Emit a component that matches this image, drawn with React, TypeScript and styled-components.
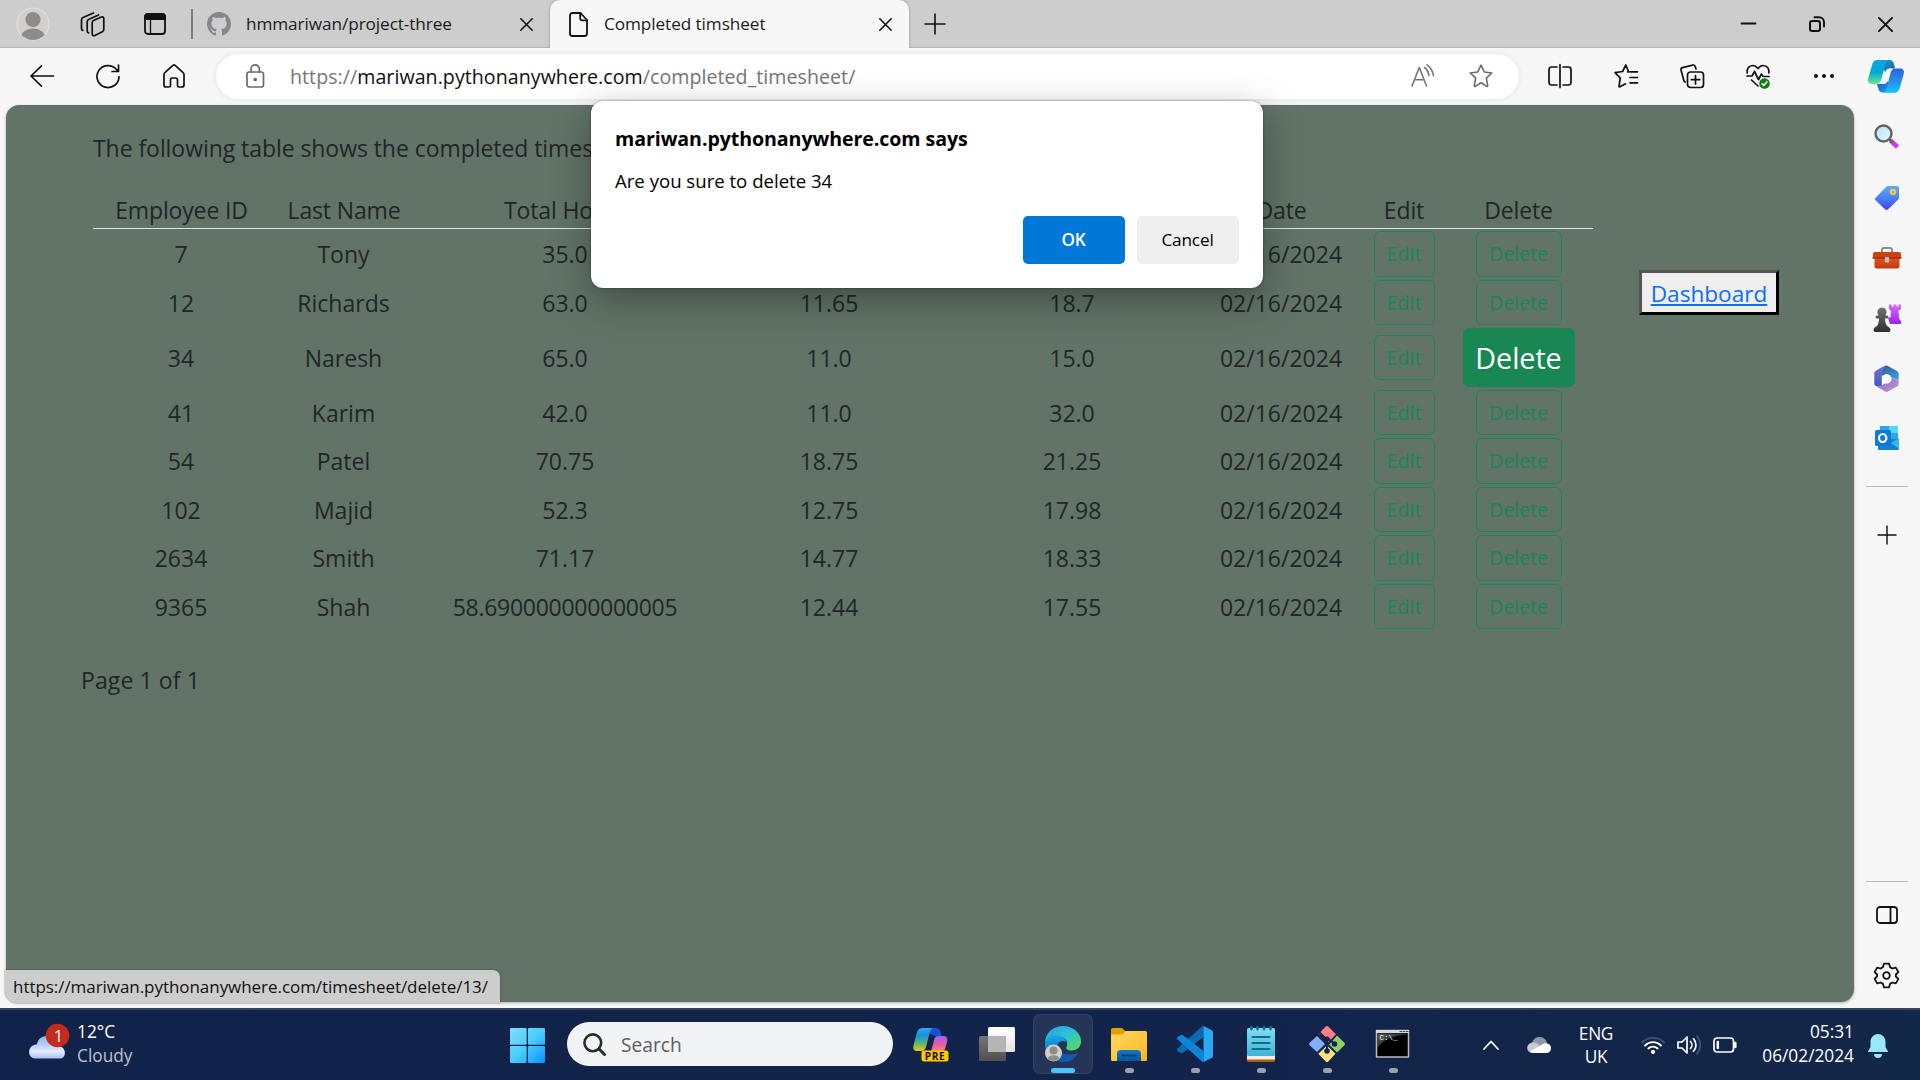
import React from 'react';
import styled, { createGlobalStyle } from 'styled-components';

const Global = createGlobalStyle`
  * { box-sizing: border-box; }
  body { margin: 0; overflow: hidden; }
  svg { display: block; flex: none; overflow: visible; }
`;

const Desktop = styled.div`
  width: 1920px;
  height: 1080px;
  display: flex;
  flex-direction: column;
  font-family: 'Open Sans', 'Noto Sans', sans-serif;
  font-size: 23px;
  color: #212529;
  overflow: hidden;
  background: #f7f7f7;
`;

/* ---------- tab strip ---------- */
const TabStrip = styled.header`
  height: 48px;
  flex: none;
  display: flex;
  align-items: center;
  background: #cdcdcd;
  box-shadow: inset 0 -2px 1px -1px #b4b4b4;
`;
const Slot = styled.div<{ $w: number }>`
  width: ${(p) => p.$w}px;
  flex: none;
  display: flex;
  align-items: center;
  justify-content: center;
`;
const TabDivider = styled.div`
  width: 2px;
  height: 30px;
  background: #7c7c7c;
`;
const Tab = styled.div<{ $active?: boolean; $w: number }>`
  width: ${(p) => p.$w}px;
  height: 48px;
  display: flex;
  align-items: center;
  padding: 0 17px 0 ${(p) => (p.$active ? 19 : 14)}px;
  border-radius: 10px 10px 0 0;
  background: ${(p) => (p.$active ? '#f7f7f7' : 'transparent')};
  box-shadow: ${(p) => (p.$active ? '0 0 3px rgba(0,0,0,.28)' : 'none')};
  clip-path: ${(p) => (p.$active ? 'inset(0 -4px 0 -4px)' : 'none')};
`;
const TabTitle = styled.span<{ $gap: number }>`
  flex: 1;
  margin-left: ${(p) => p.$gap}px;
  font-size: 17.2px;
  line-height: 24px;
  letter-spacing: -0.08px;
  color: #1b1b1b;
  white-space: nowrap;
`;
const Spacer = styled.div`
  flex: 1;
`;

/* ---------- toolbar ---------- */
const Toolbar = styled.div`
  height: 57px;
  flex: none;
  display: flex;
  align-items: center;
  background: #f7f7f7;
  padding: 0 0 1px 9px;
`;
const AddressBar = styled.div`
  width: 1303px;
  flex: none;
  height: 45px;
  margin-left: 9px;
  display: flex;
  align-items: center;
  padding: 0 26px 0 30px;
  border-radius: 23px;
  background: #fff;
  box-shadow: 0 0 6px rgba(0, 0, 0, 0.09);
`;
const Url = styled.span`
  flex: 1;
  margin-left: 26px;
  padding-top: 1px;
  font-size: 19.6px;
  line-height: 28px;
  letter-spacing: 0.05px;
  color: #767676;
  white-space: nowrap;
  b {
    font-weight: 400;
    color: #101010;
  }
`;

/* ---------- body ---------- */
const Body = styled.div`
  height: 903px;
  flex: none;
  display: flex;
  position: relative;
`;
const Page = styled.main`
  width: 1848px;
  height: 897px;
  margin-left: 6px;
  border-radius: 13px;
  background: #617467;
  box-shadow: 0 1px 3px rgba(0, 0, 0, 0.3);
  display: flex;
  padding: 27px 0 0 87px;
`;
const Content = styled.section`
  width: 1500px;
`;
const Intro = styled.p`
  margin: 0;
  line-height: 32px;
  letter-spacing: -0.06px;
  white-space: nowrap;
`;
const Table = styled.table`
  width: 1500px;
  margin-top: 30px;
  table-layout: fixed;
  border-collapse: separate;
  border-spacing: 0;
  text-align: center;
`;
const Th = styled.th<{ $w: number }>`
  width: ${(p) => p.$w}px;
  height: 35px;
  padding: 0 0 2px 1px;
  font-weight: 400;
  line-height: 32px;
  letter-spacing: -0.15px;
  border-bottom: 1px solid #dee2e6;
  white-space: nowrap;
`;
const Row = styled.tr<{ $tall?: boolean }>`
  height: ${(p) => (p.$tall ? 61.5 : 48.5)}px;
`;
const Td = styled.td`
  padding: 2px 0 0;
  line-height: 32px;
  letter-spacing: ${(p) => (String(p.children).length > 10 ? -0.28 : 0)}px;
`;
const ActionTd = styled.td`
  padding: 1px 0 0 1px;
`;
const Action = styled.button<{ $w: number; $hot?: boolean }>`
  display: block;
  margin: 0 auto;
  padding: 0;
  width: ${(p) => p.$w}px;
  height: ${(p) => (p.$hot ? 59 : 45.5)}px;
  border: 1px solid #198754;
  border-radius: 6px;
  background: ${(p) => (p.$hot ? '#198754' : 'transparent')};
  color: ${(p) => (p.$hot ? '#fff' : '#198754')};
  font: 400 ${(p) => (p.$hot ? 28.6 : 19.6)}px 'Open Sans', sans-serif;
`;
const Pager = styled.div`
  margin: 34px 0 0 -12px;
  line-height: 32px;
  letter-spacing: 0.1px;
`;
const DashButton = styled.button`
  width: 140px;
  height: 45px;
  margin: 138px 0 0 46px;
  padding: 2px 0 0;
  border: 3px solid;
  border-color: #555 #000 #000 #555;
  background: #efefef;
  font: 400 22.6px 'Open Sans', sans-serif;
  color: #0d6efd;
  text-decoration: underline;
`;
const StatusUrl = styled.div`
  position: absolute;
  left: 5px;
  bottom: 5px;
  width: 495px;
  height: 33px;
  padding-left: 8px;
  line-height: 33px;
  font-size: 17px;
  letter-spacing: -0.05px;
  border-radius: 0 7px 0 12px;
  background: #cdcdcd;
  color: #101010;
  white-space: nowrap;
  box-shadow: 0 0 2px rgba(0, 0, 0, 0.4);
`;
const Dialog = styled.div`
  position: absolute;
  left: 591px;
  top: -4px;
  width: 672px;
  height: 187px;
  padding: 24px;
  display: flex;
  flex-direction: column;
  border-radius: 12px;
  background: #fff;
  color: #000;
  box-shadow: 0 0 2px rgba(0, 0, 0, 0.5), 0 12px 38px rgba(0, 0, 0, 0.34);
`;
const DialogTitle = styled.h2`
  margin: 0;
  font-size: 19.6px;
  line-height: 28px;
  font-weight: 700;
  letter-spacing: -0.08px;
`;
const DialogText = styled.p`
  margin: 16px 0 0;
  font-size: 18.6px;
  line-height: 24px;
`;
const DialogActions = styled.div`
  display: flex;
  justify-content: flex-end;
  gap: 12px;
  margin-top: 23px;
`;
const DialogButton = styled.button<{ $primary?: boolean }>`
  width: 102px;
  height: 48px;
  border: 0;
  border-radius: 5px;
  padding: 0 1px 2px 0;
  background: ${(p) => (p.$primary ? '#0078d7' : '#efefef')};
  color: ${(p) => (p.$primary ? '#fff' : '#000')};
  font: ${(p) => (p.$primary ? 600 : 500)} 17.2px 'Open Sans', sans-serif;
  letter-spacing: -0.15px;
`;
const Sidebar = styled.aside`
  width: 66px;
  height: 903px;
  padding-right: 1px;
  display: flex;
  flex-direction: column;
  align-items: center;
`;
const SideItem = styled.div<{ $h: number }>`
  height: ${(p) => p.$h}px;
  display: flex;
  align-items: center;
  justify-content: center;
`;
const SideRule = styled.div`
  width: 42px;
  height: 1px;
  background: #b9b9b9;
`;

/* ---------- taskbar ---------- */
const Taskbar = styled.footer`
  height: 72px;
  flex: none;
  display: flex;
  align-items: center;
  border-top: 2px solid #34435f;
  background: linear-gradient(90deg, #12234a, #12244a 65%, #132748);
  color: #fff;
`;
const Weather = styled.div`
  width: 510px;
  height: 70px;
  padding: 0 0 2px 29px;
  display: flex;
  align-items: center;
  gap: 10px;
  font-size: 17.3px;
  line-height: 24px;
`;
const Muted = styled.div`
  color: #bcc2d0;
`;
const SearchBox = styled.div`
  width: 326px;
  height: 44px;
  margin: -2px 5px 0 22px;
  padding-left: 16px;
  display: flex;
  align-items: center;
  gap: 15px;
  border-radius: 22px;
  background: #f2f3f5;
  color: #5c5e62;
  font-size: 19.2px;
`;
const App66 = styled.div<{ $active?: boolean }>`
  width: 60px;
  height: 60px;
  margin: 0 3px 2px;
  padding-top: 12px;
  display: flex;
  flex-direction: column;
  align-items: center;
  justify-content: space-between;
  border-radius: 7px;
  background: ${(p) => (p.$active ? 'rgba(255,255,255,.08)' : 'transparent')};
  box-shadow: ${(p) => (p.$active ? 'inset 0 0 0 1px rgba(255,255,255,.07)' : 'none')};
`;
const Pill = styled.div<{ $kind: 'none' | 'open' | 'active' }>`
  width: ${(p) => (p.$kind === 'active' ? 24 : 9)}px;
  height: 5px;
  border-radius: 3px;
  margin-bottom: 1px;
  background: ${(p) => (p.$kind === 'active' ? '#4cc2ff' : p.$kind === 'open' ? '#9aa2b2' : 'transparent')};
`;
const Lang = styled.div`
  width: 60px;
  text-align: center;
  font-size: 17.3px;
  line-height: 23px;
  margin: 0 15px 1px 3px;
  letter-spacing: -0.3px;
`;
const Clock = styled.div`
  width: 111px;
  text-align: right;
  font-size: 17.3px;
  line-height: 24px;
  margin-bottom: 3px;
`;

/* ---------- icons ---------- */
type IconProps = {
  w?: number;
  h?: number;
  box?: string;
  color?: string;
  sw?: number;
  children: React.ReactNode;
};
const Icon = ({ w = 24, h = 24, box, color = '#111', sw = 1.6, children }: IconProps) => (
  <svg
    width={w}
    height={h}
    viewBox={box || `0 0 ${w} ${h}`}
    fill="none"
    stroke={color}
    strokeWidth={sw}
    strokeLinecap="round"
    strokeLinejoin="round"
  >
    {children}
  </svg>
);

const Avatar = () => (
  <Icon w={34} h={34} color="none">
    <defs>
      <clipPath id="avatarClip"><circle cx="17" cy="17" r="16" /></clipPath>
    </defs>
    <circle cx="17" cy="17" r="16" fill="#d2d0cd" stroke="#e2e0dd" strokeWidth="1.2" />
    <g clipPath="url(#avatarClip)" fill="#8f8b88">
      <circle cx="17" cy="12.5" r="7.6" />
      <ellipse cx="17" cy="32" rx="12.6" ry="10.5" />
    </g>
  </Icon>
);
const Workspaces = () => (
  <Icon w={25} h={25} sw={1.7}>
    <path d="M13.500 8.600 21.300 5a1.700 1.700 0 0 1 2.500 1.500V17.500a2.600 2.600 0 0 1-1.500 2.300l-7.400 3.700a1.800 1.800 0 0 1-2.700-1.600V10.800a2.400 2.400 0 0 1 1.300-2.200Z" />
    <path d="M18.500 3 9 7.200A2.800 2.800 0 0 0 7.200 9.800V19a2 2 0 0 0 1.300 1.900" />
    <path d="M13.500 1 3.500 5.200A3 3 0 0 0 1.500 8v8.500a2 2 0 0 0 1.300 1.900" />
  </Icon>
);
const TabActions = () => (
  <Icon w={22} h={22} sw={1.8}>
    <rect x="1" y="1" width="20" height="20" rx="3" />
    <path d="M1 6V4a3 3 0 0 1 3-3h14a3 3 0 0 1 3 3v2Z" fill="#111" />
    <path d="M6.500 6v15" strokeWidth="1.300" />
  </Icon>
);
const GitHub = () => (
  <svg width="24" height="24" viewBox="0 0 16 16" fill="#85878a">
    <path d="M8 0C3.580 0 0 3.580 0 8c0 3.540 2.290 6.530 5.470 7.590.4.070.55-.17.55-.38 0-.19-.01-.82-.01-1.490-2.010.37-2.530-.49-2.690-.94-.09-.23-.48-.94-.82-1.130-.28-.15-.68-.52-.01-.53.63-.01 1.080.58 1.230.82.72 1.210 1.870.87 2.330.66.070-.52.28-.87.51-1.070-1.780-.2-3.640-.89-3.640-3.950 0-.87.31-1.590.82-2.150-.08-.2-.36-1.020.08-2.120 0 0 .67-.21 2.200.82.64-.18 1.320-.27 2-.27s1.360.09 2 .27c1.530-1.040 2.200-.82 2.200-.82.44 1.100.16 1.920.08 2.120.51.56.82 1.270.82 2.150 0 3.070-1.870 3.750-3.650 3.950.29.25.54.73.54 1.480 0 1.070-.01 1.930-.01 2.200 0 .21.15.46.55.38A8.010 8.010 0 0 0 16 8c0-4.420-3.580-8-8-8Z" />
  </svg>
);
const Cross = ({ s = 13, sw = 1.6 }: { s?: number; sw?: number }) => (
  <Icon w={s} h={s} box="0 0 13 13" sw={sw}>
    <path d="m.8.8 11.400 11.400M12.200.8.8 12.200" />
  </Icon>
);
const Plus = ({ s = 20 }: { s?: number }) => (
  <Icon w={s} h={s} box="0 0 20 20" sw={1.6}><path d="M10 0v20M0 10h20" /></Icon>
);
const FileIcon = () => (
  <Icon w={19} h={25} sw={1.8}>
    <path d="M3.500 1h8L18 8v13.500a2.500 2.500 0 0 1-2.500 2.500h-12A2.500 2.500 0 0 1 1 21.500v-18A2.500 2.500 0 0 1 3.500 1Z" />
    <path d="M11.200 1.300v5.200a1.800 1.800 0 0 0 1.800 1.800h4.800" />
  </Icon>
);
const Lock = () => (
  <Icon w={18} h={24} color="#6b6b6b" sw={1.7}>
    <rect x="1" y="8" width="16.500" height="15" rx="2.200" />
    <path d="M5 8V5a4.200 4.200 0 0 1 8.400 0v3" />
    <circle cx="9.200" cy="15.500" r="1" fill="#6b6b6b" />
  </Icon>
);
const STAR = 'M12 1.200 15.300 8l7.500 1-5.500 5.200 1.400 7.500c.1.700-.4 1-1 .7L12 18.800l-5.700 3.600c-.6.300-1.100 0-1-.7l1.400-7.500L1.200 9l7.500-1Z';

const grad = (id: string, stops: string[], v = false) => (
  <linearGradient id={id} x1="0" y1="0" x2={v ? '0' : '1'} y2="1">
    {stops.map((c, i) => <stop key={c} offset={i / (stops.length - 1)} stopColor={c} />)}
  </linearGradient>
);

const Copilot = () => (
  <Icon w={36} h={33} color="none">
    <defs>
      {grad('cpA', ['#1ba0e2', '#00a9d8', '#6be58a'], true)}
      {grad('cpB', ['#2468d8', '#2a8af0', '#14c4f4'], true)}
      {grad('cpC', ['#12b5e0', '#12588c'])}
      {grad('cpD', ['#1848c8', '#22b8f0'])}
    </defs>
    <path d="M8 0h13.500c2.500 0 3.600 1.300 4.400 3.800L27 8.500h-4.500c-2.300 0-3 1.500-4 4.500Z" fill="url(#cpC)" />
    <path d="M28 32.500H14.500c-2.500 0-3.400-1.300-4.100-3.800L9 24h5c2.500 0 3.200-2 4-4.500Z" fill="url(#cpD)" />
    <path d="M9 0h12c-1.900.4-2.900 2.300-3.600 4.600L13.300 19.500c-.9 3-2.400 4.500-5.300 4.500H4c-3.600 0-4.700-2.400-3.600-6.300L4 5.200C5 1.600 6.300 0 9 0Z" fill="url(#cpA)" />
    <path d="M27.500 8.500H32c3.600 0 4.600 2.400 3.500 6.300L32 27.300c-1 3.600-2.300 5.200-5 5.200H15c1.900-.4 2.900-2.300 3.600-4.600L22.500 13c.8-3 2-4.500 5-4.500Z" fill="url(#cpB)" />
    <path d="M18 10.800c.6-1.600 1.700-2.300 3.200-2.300h3c-1.400.8-2 2.300-2.600 4.200L19.400 21c-.7 2-1.700 3-3.400 3h-4c1.400-.7 2.200-2 2.800-3.800Z" fill="#f4f9fb" />
  </Icon>
);

const CloudColor = () => (
  <Icon w={38} h={36} color="none">
    <defs>{grad('cl', ['#8fb4f5', '#dfe8fb'], true)}{grad('cl2', ['#b9cdf8', '#e3ebfb', '#a9c0f3'], true)}</defs>
    <path d="M8 22C7 14 12 10 18 10s11 4 12 10l-3 8H10Z" fill="url(#cl)" />
    <path d="M7 18.500c5-.5 8 1.500 9.500 4.500 3-4 13-4.500 17-1.500 4 3.500 3 11-2.500 11H6.500C-2 32.500-2 19.500 7 18.500Z" fill="url(#cl2)" />
    <circle cx="28.500" cy="9.500" r="11.800" fill="#c42b1c" />
    <text x="29.500" y="15.500" fill="#fff" fontSize="16.500" textAnchor="middle" fontFamily="Open Sans, sans-serif">1</text>
  </Icon>
);
const WindowsLogo = () => (
  <Icon w={35} h={35} color="none">
    <defs><linearGradient id="wn" gradientUnits="userSpaceOnUse" x1="0" y1="0" x2="35" y2="35"><stop stopColor="#85dcff" /><stop offset=".5" stopColor="#48cdfd" /><stop offset="1" stopColor="#0a94ff" /></linearGradient></defs>
    <g fill="url(#wn)">
      <rect width="16.700" height="16.700" rx="1" /><rect x="18" width="17" height="16.700" rx="1" />
      <rect y="18" width="16.700" height="17" rx="1" /><rect x="18" y="18" width="17" height="17" rx="1" />
    </g>
  </Icon>
);
const CopilotPre = () => (
  <Icon w={36} h={36} color="none">
    <defs>
      {grad('pa', ['#2aa8f0', '#1b8fe0', '#5bb86a', '#f5c518'], true)}
      {grad('pb', ['#9a62f0', '#e85aa8', '#ff8a5c'], true)}
    </defs>
    <path d="M9 2h14c3 0 5 3 5.500 8h-6L17 8Z" fill="#1c4fd0" />
    <path d="M9 2h11.500c-2.500.5-3.500 3-4.200 6L13.500 19c-1 4.500-2.500 6-6 6H4c-3.500 0-4.300-2.500-3.300-6.500L3.500 8C4.500 4 6 2 9 2Z" fill="url(#pa)" />
    <path d="M25 10h5c3.700 0 5 2 4 6l-2 7c-.6 2-1.500 3-3 3H18l3-12c.8-3 2-4 4-4Z" fill="url(#pb)" />
    <rect x="8.500" y="24.500" width="27" height="11" rx="2.500" fill="#ffc800" />
    <text x="22" y="33.600" fill="#14120a" fontSize="10" fontWeight="700" textAnchor="middle" letterSpacing=".6" fontFamily="Open Sans, sans-serif">PRE</text>
  </Icon>
);
const TaskView = () => (
  <Icon w={36} h={36} color="none">
    <defs>{grad('tv', ['#747474', '#505050'], true)}{grad('tw', ['#ffffff', '#e4e4e4'], true)}</defs>
    <rect x="0" y="10" width="27" height="25" rx="1.500" fill="url(#tv)" />
    <rect x="9" y="1" width="27" height="25" rx="1.500" fill="url(#tw)" />
    <path d="M9 10h18v16H10.500A1.500 1.500 0 0 1 9 24.500Z" fill="#b5b5b5" />
  </Icon>
);
const Edge = () => (
  <Icon w={36} h={36} color="none">
    <defs>
      {grad('eg', ['#2b9be8', '#2cc3d2', '#60e04a'])}
      {grad('eb', ['#1aa5e8', '#0b62bd'], true)}
      {grad('ed', ['#0d4f9e', '#1660b4'])}
    </defs>
    <path d="M0 17C0 7 8 0 18 0s18 7 18 15c0 6-4 9.500-9 9.500-4.500 0-6.500-1.500-5.500-3.500 1.500-2 1.500-9-5.500-10C9 10 2 12 0 17Z" fill="url(#eg)" />
    <path d="M0 17C2 11 7 9 12 9.500c6 .5 9 4 9.500 7-3-3-8.500-1.500-9.500 3.500-1 7 4 14 10 15.500C10 38-1 29 0 17Z" fill="url(#eb)" />
    <path d="M12.500 18c-1.500 7 6.500 13 20.500 9.200-3 5.300-8 8.800-14 8.800-7 0-10-12-6.500-18Z" fill="url(#ed)" />
    <circle cx="8.500" cy="27" r="8.500" fill="#d2d0cd" />
    <circle cx="8.500" cy="24.500" r="4" fill="#8f8b88" />
    <path d="M2.500 32.500c1.500-4.500 10.500-4.500 12 0a8.500 8.500 0 0 1-12 0Z" fill="#8f8b88" />
  </Icon>
);
const Folder = () => (
  <Icon w={36} h={36} color="none">
    <defs>{grad('fo', ['#ffd766', '#fbb91a'])}{grad('fb', ['#1277cf', '#0b559e'], true)}</defs>
    <path d="M0 4a2 2 0 0 1 2-2h9l4 3.500V9H0Z" fill="#e09f00" />
    <path d="M0 8.500h11L15 5h19.500A1.500 1.500 0 0 1 36 6.500v27a1.500 1.500 0 0 1-1.500 1.500h-33A1.500 1.500 0 0 1 0 33.500Z" fill="url(#fo)" />
    <path d="M6 35v-7a4 4 0 0 1 4-4h16a4 4 0 0 1 4 4v7Z" fill="url(#fb)" />
    <path d="M11 29.500h14" stroke="#0a3f78" strokeWidth="1.800" strokeLinecap="round" />
  </Icon>
);
const VSCode = () => (
  <Icon w={36} h={36} color="none">
    <path d="M26.500 0v11L5 27.500 .9 25.200C-.2 24.500-.3 23.300.6 22.400L25 .5Z" fill="#0a6cb4" />
    <path d="M26.500 36V25L5 8.500.9 10.800c-1.100.7-1.200 1.900-.3 2.800L25 35.500Z" fill="#0c86d8" />
    <path d="M26.500 0l8 3.900c1 .5 1.500 1.300 1.500 2.400v23.400c0 1.100-.5 1.900-1.500 2.400l-8 3.900Z" fill="#28a8f0" />
  </Icon>
);
const Notepad = () => (
  <Icon w={28} h={36} color="none">
    <defs>{grad('np', ['#83dcf2', '#43b2d4'], true)}</defs>
    <rect y="31" width="28" height="5" rx="1.500" fill="#b35a12" />
    <rect y="28" width="28" height="5.500" fill="#f1eeee" />
    <rect y="2" width="28" height="28" rx="1.500" fill="url(#np)" />
    <path d="M5.500 11h17M5.500 17h17M5.500 23h17" stroke="#0a6d8e" strokeWidth="2" strokeLinecap="round" />
    <g fill="#0f7391">
      {[4.5, 10.5, 17, 23.5].map((x) => <rect key={x} x={x - 1.4} y="0" width="2.800" height="4.500" rx="1.400" />)}
    </g>
  </Icon>
);
const Git = () => (
  <Icon w={36} h={36} color="none">
    <path d="M16.500.8a2 2 0 0 1 3 0l7.500 7.500-8 8.200-2.500-2.500v-3L9.500 8Z" fill="#ff7f86" />
    <path d="M28 9.500l7.200 7a2 2 0 0 1 0 3L28 26.500l-8-8 2-2Z" fill="#8dd06a" />
    <path d="M8 10l8 8-8 8-7.200-6.600a2 2 0 0 1 0-3Z" fill="#82aefc" />
    <path d="M18 19.500l8.500 8.300-7 7.400a2 2 0 0 1-3 0l-7.200-7.400Z" fill="#ffe180" />
    <path d="M10.500 6.500 18 14v12M18 12l8 6" stroke="#12244a" strokeWidth="2" />
    <circle cx="18" cy="13" r="2.600" fill="#12244a" /><circle cx="18" cy="25" r="2.800" fill="#12244a" /><circle cx="25.500" cy="18" r="2.800" fill="#12244a" />
  </Icon>
);
const Cmd = () => (
  <Icon w={34} h={36} color="none">
    <defs>{grad('cm', ['#777', '#111'])}</defs>
    <rect x=".5" y="4.500" width="32" height="26.500" fill="#000" stroke="#b9bcc0" strokeWidth="1.500" />
    <rect x="0" y="4" width="33" height="3" fill="#d5d8de" />
    <path d="M24 5.500h2M27.500 5.500h1.500M30.500 5.500H32" stroke="#444c5c" strokeWidth="1.200" />
    <path d="M1.500 7.500h30v1C17 9.500 6 14 1.500 22Z" fill="url(#cm)" opacity=".75" />
    <text x="3.500" y="14" fill="#fff" fontSize="7.500" fontFamily="Liberation Mono, monospace">C:\_</text>
  </Icon>
);

const columns: [string, number][] = [
  ['Employee ID', 176], ['Last Name', 149], ['Total Hours', 294], ['', 234],
  ['', 252], ['Date', 166], ['Edit', 79], ['Delete', 150],
];
const rows = [
  ['7', 'Tony', '35.0', '', ''],
  ['12', 'Richards', '63.0', '11.65', '18.7'],
  ['34', 'Naresh', '65.0', '11.0', '15.0'],
  ['41', 'Karim', '42.0', '11.0', '32.0'],
  ['54', 'Patel', '70.75', '18.75', '21.25'],
  ['102', 'Majid', '52.3', '12.75', '17.98'],
  ['2634', 'Smith', '71.17', '14.77', '18.33'],
  ['9365', 'Shah', '58.690000000000005', '12.44', '17.55'],
];

const apps: [React.ReactNode, 'none' | 'open' | 'active'][] = [
  [<CopilotPre />, 'none'], [<TaskView />, 'none'], [<Edge />, 'active'], [<Folder />, 'open'],
  [<VSCode />, 'open'], [<Notepad />, 'open'], [<Git />, 'open'], [<Cmd />, 'open'],
];

const Tabs = () => (
  <TabStrip>
    <Slot $w={66}><Avatar /></Slot>
    <Slot $w={53}><Workspaces /></Slot>
    <Slot $w={72}><TabActions /></Slot>
    <TabDivider />
    <Tab $w={357}>
      <GitHub />
      <TabTitle $gap={15}>hmmariwan/project-three</TabTitle>
      <Cross />
    </Tab>
    <Tab $w={359} $active>
      <FileIcon />
      <TabTitle $gap={16}>Completed timsheet</TabTitle>
      <Cross />
    </Tab>
    <Slot $w={52}><Plus s={20} /></Slot>
    <Spacer />
    <Slot $w={70}><Icon w={15} h={4} sw={1.8}><path d="M.5 1.500h14" /></Icon></Slot>
    <Slot $w={68}>
      <Icon w={16} h={16} sw={2}>
        <rect x="1" y="5" width="10" height="10" rx="2.200" />
        <path d="M5.500 1.200h4.500a5 5 0 0 1 5 5V10.500" />
      </Icon>
    </Slot>
    <Slot $w={69}><Cross s={15} sw={1.7} /></Slot>
  </TabStrip>
);

const Tools = () => (
  <Toolbar>
    <Slot $w={66}><Icon w={24} h={22} sw={1.7}><path d="M23.500 11H1M11.500.8 1 11l10.500 10.200" /></Icon></Slot>
    <Slot $w={66}><Icon w={24} h={25} sw={1.7}><path d="M23 12.500A11 11 0 1 1 20 5l2 2M22.500 1v6.500H16" /></Icon></Slot>
    <Slot $w={66}><Icon w={22} h={24} sw={1.7}><path d="M1 10.500c0-.8.300-1.400.9-1.900l8-7.200a1.700 1.700 0 0 1 2.200 0l8 7.200c.6.500.9 1.100.9 1.900V21a2 2 0 0 1-2 2h-3a1.500 1.500 0 0 1-1.500-1.500V16a2 2 0 0 0-2-2h-3a2 2 0 0 0-2 2v5.500A1.500 1.500 0 0 1 6 23H3a2 2 0 0 1-2-2Z" /></Icon></Slot>
    <AddressBar>
      <Lock />
      <Url>https://<b>mariwan.pythonanywhere.com</b>/completed_timesheet/</Url>
      <Icon w={24} h={24} color="#767676" sw={1.6}>
        <path d="M1 22 8.300 3.500 15.500 22M3.500 15.800h9.500M13.500 3.500a12 12 0 0 1 4.500 8M16 .8a16 16 0 0 1 6.500 11" />
      </Icon>
      <Slot $w={34} />
      <Icon color="#6b6b6b" sw={1.6}><path d={STAR} /></Icon>
    </AddressBar>
    <Slot $w={16} />
    <Slot $w={49}><Icon w={24} h={24} sw={1.7}><path d="M9 3H3.500A2.500 2.500 0 0 0 1 5.500v13A2.500 2.500 0 0 0 3.500 21H9M15 3h5.500A2.500 2.500 0 0 1 23 5.500v13a2.500 2.500 0 0 1-2.500 2.500H15M12 .5v23" /></Icon></Slot>
    <Slot $w={83}><Icon w={24} h={24} sw={1.7}><path d="M16 7.800h7.500M16 13.500h7.500M16 18.800h7.500M13.500 7.800h1.200L11.800 1 8.600 7.500 1 8.600l5.300 5.400-1.300 8.200c-.1.600.4.900.9.600l5.600-3" /></Icon></Slot>
    <Slot $w={49}><Icon w={24} h={24} sw={1.7}><rect x="7.500" y="8" width="16" height="15.500" rx="3" /><path d="M15.500 11.500v8.500M11.300 15.700h8.500M16 5l-.8-2.500c-.4-1.200-1.300-1.700-2.500-1.400L2.500 3.600C1.300 4 .7 4.800 1 6l3 11c.2.700.6 1 1.200 1" /></Icon></Slot>
    <Slot $w={83}>
      <Icon w={24} h={24} sw={1.7}>
        <path d="M1.200 9C.3 5 3 1.500 6.500 1.500c2.500 0 4 1 5.500 3 1.500-2 3-3 5.500-3C21 1.500 23.700 5 22.800 9M1 12h5l2.500-4.500 4 8L15.500 10l1.500 2.500h6M5.500 16l6.500 6" />
        <circle cx="18.500" cy="19.500" r="5.300" fill="#107c10" stroke="none" />
        <path d="m16 19.800 1.700 1.600 3.300-3.600" stroke="#fff" strokeWidth="1.500" />
      </Icon>
    </Slot>
    <Slot $w={49}><Icon w={20} h={4} color="none"><g fill="#111"><circle cx="2" cy="2" r="2" /><circle cx="10" cy="2" r="2" /><circle cx="18" cy="2" r="2" /></g></Icon></Slot>
    <Slot $w={76}><Copilot /></Slot>
  </Toolbar>
);

const SideBar = () => (
  <Sidebar>
    <SideItem $h={63}>
      <Icon w={25} h={25} color="none">
        <defs>{grad('sg', ['#b8e4ff', '#e4f5ff'])}</defs>
        <path d="m16.500 16.500 7 6.500" stroke="#c83cf0" strokeWidth="4.500" strokeLinecap="butt" />
        <path d="m14 14 4 4" stroke="#606060" strokeWidth="2.500" />
        <circle cx="9.500" cy="9.500" r="8" fill="url(#sg)" stroke="#636363" strokeWidth="2.400" />
      </Icon>
    </SideItem>
    <SideItem $h={59}>
      <Icon w={24} h={24} color="none">
        <defs>{grad('tg', ['#62a8ff', '#4c80fa', '#3a3ff0'], true)}</defs>
        <path d="M13 0h9a2 2 0 0 1 2 2v9.500c0 1-.3 1.500-1 2.200L13 23.200c-1 1-2 1-3 0l-9.200-8.700c-1-1-1-2 0-3L11 1c.7-.7 1.200-1 2-1Z" fill="url(#tg)" />
        <circle cx="18" cy="6" r="2.200" fill="#7fa8e8" stroke="#ffce2e" strokeWidth="1.900" />
      </Icon>
    </SideItem>
    <SideItem $h={62}>
      <Icon w={28} h={22} color="none">
        <defs>{grad('bc', ['#e2571c', '#c2390e'], true)}</defs>
        <path d="M9 6V3a2 2 0 0 1 2-2h6a2 2 0 0 1 2 2v3" stroke="#8d8d8d" strokeWidth="2" />
        <path d="M1.500 10h25v9.500a2 2 0 0 1-2 2h-21a2 2 0 0 1-2-2Z" fill="url(#bc)" />
        <path d="M1.500 5h25A1.500 1.500 0 0 1 28 6.500V11H0V6.500A1.500 1.500 0 0 1 1.500 5Z" fill="#c8420f" />
        <path d="M0 11h28" stroke="#a22c08" />
        <rect x="11.800" y="10" width="4.400" height="5.500" rx="1" fill="#b9c0c4" />
      </Icon>
    </SideItem>
    <SideItem $h={57}>
      <Icon w={28} h={28} color="none">
        <defs>{grad('pw', ['#707070', '#303030'], true)}{grad('rk', ['#d86af6', '#a01ef2'], true)}</defs>
        <path d="M16 .5h2.500v2h2v-2h3v2h2v-2H28V5l-2.500 2 .7 8 1.800 2v3H17l-2-6 2.500-1 .5-6-2-2Z" fill="url(#rk)" />
        <path d="M9 3.500a4.700 4.700 0 0 1 3.300 8H14a1.500 1.500 0 0 1 0 3h-2c0 3 .5 5 2 7.500 2 1 3.500 2 3.500 4 0 1.300-.5 2-2 2H2.500c-1.500 0-2-.7-2-2 0-2 1.500-3 3.500-4 1.500-2.500 2-4.500 2-7.500H4a1.500 1.500 0 0 1 0-3h1.700a4.700 4.700 0 0 1 3.300-8Z" fill="url(#pw)" />
      </Icon>
    </SideItem>
    <SideItem $h={64}>
      <Icon w={25} h={27} color="none">
        <defs>{grad('m1', ['#6878d0', '#4458c0'], true)}{grad('m2', ['#3158a0', '#38a8e0'])}{grad('m3', ['#8a62b8', '#c09ae0'])}</defs>
        <path d="M12 .5c-1.500 0-8 4-10.500 5.500C.5 6.700.3 7.500.3 9v10c0 2 4 3.500 7.500 2V11c0-3 1.500-5 5-6.500Z" fill="url(#m1)" />
        <path d="M12.500.3 23 6c1.200.7 1.700 1.500 1.700 3v6.500L17 12c-1-2-3-3-6-2.500L8 11c0-6 2-9 4.500-10.700Z" fill="url(#m2)" />
        <path d="M2.500 21.500c4 .5 6-1 8-3 3 1 5.500-.5 7-3V12l7.200 4v2.500c0 1.500-.5 2.300-1.700 3L14 26.500c-1 .6-2 .6-3 0Z" fill="url(#m3)" />
        <circle cx="12.500" cy="13.500" r="4.300" fill="#f7f7f7" />
      </Icon>
    </SideItem>
    <SideItem $h={56}>
      <Icon w={24} h={24} color="none">
        <rect x="5" width="18" height="14" rx="1" fill="#28a8ea" />
        <path d="M14 0h8a1 1 0 0 1 1 1v6h-9Z" fill="#50d9ff" />
        <path d="M3 13h21v9.500a1.500 1.500 0 0 1-1.500 1.500h-18A1.500 1.500 0 0 1 3 22.500Z" fill="#1482cf" />
        <path d="m24 12-8 5 8 6Z" fill="#35b8f1" />
        <rect y="4" width="16" height="16" rx="1.500" fill="#0f78d4" />
        <ellipse cx="7.700" cy="12" rx="3.700" ry="4" stroke="#fff" strokeWidth="2.200" />
      </Icon>
    </SideItem>
    <SideItem $h={20} />
    <SideRule />
    <SideItem $h={96}><Plus s={18} /></SideItem>
    <Spacer />
    <SideRule />
    <SideItem $h={66}>
      <Icon w={22} h={18} sw={1.8}><rect x="1" y="1" width="20" height="16" rx="3" /><path d="M14.500 1v16" /></Icon>
    </SideItem>
    <SideItem $h={54}>
      <svg width="27" height="27" viewBox="-13.5 -13.5 27 27" fill="none" stroke="#111" strokeWidth="1.8" strokeLinejoin="round">
        <path d="M-2.600-11.800h5.200l.9 3.400 2.400 1.400 3.400-.9 2.600 4.500L9.400-1v2l2.500 2.400-2.600 4.500-3.400-.9-2.400 1.400-.9 3.400h-5.200l-.9-3.400L-5.900 7l-3.400.9-2.600-4.500L-9.400 1v-2l-2.500-2.400 2.600-4.500 3.400.9 2.400-1.400Z" />
        <circle r="3.300" />
      </svg>
    </SideItem>
    <SideItem $h={6} />
  </Sidebar>
);

const TaskBar = () => (
  <Taskbar>
    <Weather>
      <CloudColor />
      <div>
        <div>12°C</div>
        <Muted>Cloudy</Muted>
      </div>
    </Weather>
    <WindowsLogo />
    <SearchBox>
      <Icon w={23} h={23} color="#2c2c2c" sw={2.6}><circle cx="9.800" cy="9.800" r="8.400" /><path d="m16 16 5.500 5.500" strokeWidth="3" /></Icon>
      Search
    </SearchBox>
    {apps.map(([icon, kind], i) => (
      <App66 key={i} $active={kind === 'active'}>
        {icon}
        <Pill $kind={kind} />
      </App66>
    ))}
    <Spacer />
    <Slot $w={48}><Icon w={16} h={10} color="#fff" sw={1.8}><path d="m1 9 7-7.500L15 9" /></Icon></Slot>
    <Slot $w={48}>
      <Icon w={24} h={16} color="none">
        <path d="M5 6.500C6 2 9 0 12.500 0c4 0 6.500 2.500 7.500 6L12 11Z" fill="#8f98ab" />
        <path d="M5.500 5.500C9 5 11 7 13 9L3 15.500C-1.500 13-.5 6 5.500 5.500Z" fill="#c5cad4" />
        <path d="M2.500 14.500 17 6.500c4-1 7 1.500 7 4.500s-2 5-5 5H5.500c-1 0-2-.5-3-1.500Z" fill="#fff" />
      </Icon>
    </Slot>
    <Lang>ENG<br />UK</Lang>
    <Slot $w={24}>
      <Icon w={24} h={18} color="#fff" sw={1.8}>
        <path d="M1 6.500a15.500 15.500 0 0 1 22 0" stroke="#46536f" />
        <path d="M4 9.500a11.300 11.300 0 0 1 16 0M7.300 12.500a6.800 6.800 0 0 1 9.400 0" />
        <circle cx="12" cy="16" r="1.500" fill="#fff" stroke="none" />
        <circle cx="12" cy="15.800" r="1.200" />
      </Icon>
    </Slot>
    <Slot $w={12} />
    <Icon w={24} h={20} color="#fff" sw={1.7}>
      <path d="M1 7h4l5-5v16l-5-5H1ZM13.500 6.500a5 5 0 0 1 0 7M16.500 3.800a9 9 0 0 1 0 12.400" />
      <path d="M19.800 1.200a13 13 0 0 1 0 17.600" stroke="#46536f" />
    </Icon>
    <Slot $w={12} />
    <Icon w={24} h={16} color="#fff" sw={1.7}>
      <rect x="1" y="1" width="19.500" height="14" rx="3" />
      <path d="M22.300 6v4" strokeWidth="2.500" />
      <path d="M4.800 5v6" strokeWidth="2.500" />
    </Icon>
    <Slot $w={6} />
    <Clock>05:31<br />06/02/2024</Clock>
    <Slot $w={14} />
    <Icon w={20} h={23} color="none">
      <path d="M10 0a7.500 7.500 0 0 1 7.500 7.500V13l2.500 4.500v.5H0v-.5L2.500 13V7.500A7.500 7.500 0 0 1 10 0ZM6 20h8a4 4 0 0 1-8 0Z" fill="#98e6ff" />
    </Icon>
    <Slot $w={32} />
  </Taskbar>
);

export default function App() {
  return (
    <Desktop>
      <Global />
      <Tabs />
      <Tools />
      <Body>
        <Page>
          <Content>
            <Intro>The following table shows the completed timesheet</Intro>
            <Table>
              <thead>
                <tr>{columns.map(([name, w], i) => <Th key={i} $w={w}>{name}</Th>)}</tr>
              </thead>
              <tbody>
                {rows.map((r) => {
                  const hot = r[0] === '34';
                  return (
                    <Row key={r[0]} $tall={hot}>
                      {r.map((c, i) => <Td key={i}>{c}</Td>)}
                      <Td>02/16/2024</Td>
                      <ActionTd><Action $w={61}>Edit</Action></ActionTd>
                      <ActionTd><Action $w={hot ? 112 : 86} $hot={hot}>Delete</Action></ActionTd>
                    </Row>
                  );
                })}
              </tbody>
            </Table>
            <Pager>Page 1 of 1</Pager>
          </Content>
          <DashButton>Dashboard</DashButton>
        </Page>
        <SideBar />
        <StatusUrl>https://mariwan.pythonanywhere.com/timesheet/delete/13/</StatusUrl>
        <Dialog>
          <DialogTitle>mariwan.pythonanywhere.com says</DialogTitle>
          <DialogText>Are you sure to delete 34</DialogText>
          <DialogActions>
            <DialogButton $primary>OK</DialogButton>
            <DialogButton>Cancel</DialogButton>
          </DialogActions>
        </Dialog>
      </Body>
      <TaskBar />
    </Desktop>
  );
}
